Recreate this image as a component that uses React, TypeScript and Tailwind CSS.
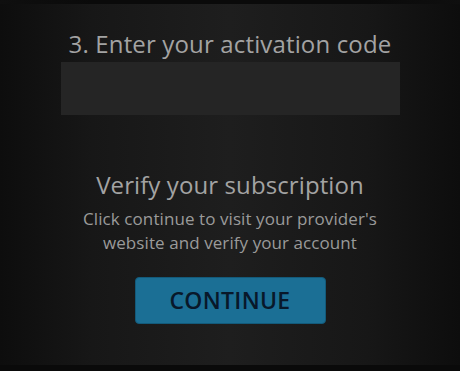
export default function App() {
  return (
    <div
      className="w-[460px] h-[371px] overflow-hidden flex flex-col items-center bg-[linear-gradient(90deg,#0d0d0d_0%,#171717_20%,#1e1e1e_50%,#171717_80%,#0d0d0d_100%)]"
      style={{ fontFamily: '"Open Sans", "Noto Sans", sans-serif' }}
    >
      <div className="w-full h-[4px] bg-[linear-gradient(90deg,#0f0f0f,#0a0a0a_20%,#0a0a0a_80%,#0f0f0f)]" />
      <div className="mt-[25px] text-[24px] leading-[30px] text-[#a3a3a3] tracking-[0.15px]">
        3. Enter your activation code
      </div>
      <div className="mt-[3px] w-[339px] h-[53px] bg-[#252525] ml-[1px]" />
      <div className="mt-[55px] text-[24px] leading-[30px] text-[#a3a3a3] tracking-[0.1px]">
        Verify your subscription
      </div>
      <div className="mt-[7px] text-[17px] leading-[24px] text-[#9a9a9a] text-center tracking-[0.08px]">
        Click continue to visit your provider's
        <br />
        website and verify your account
      </div>
      <div className="mt-[22px] w-[191px] h-[47px] rounded-[4px] bg-[#1b6f95] border border-[#135a7a] flex items-center justify-center text-[23px] font-semibold text-[#08182a] tracking-[0.3px]">
        CONTINUE
      </div>
      <div className="mt-auto w-full h-[6px] bg-[#0a0a0a]" />
    </div>
  );
}
